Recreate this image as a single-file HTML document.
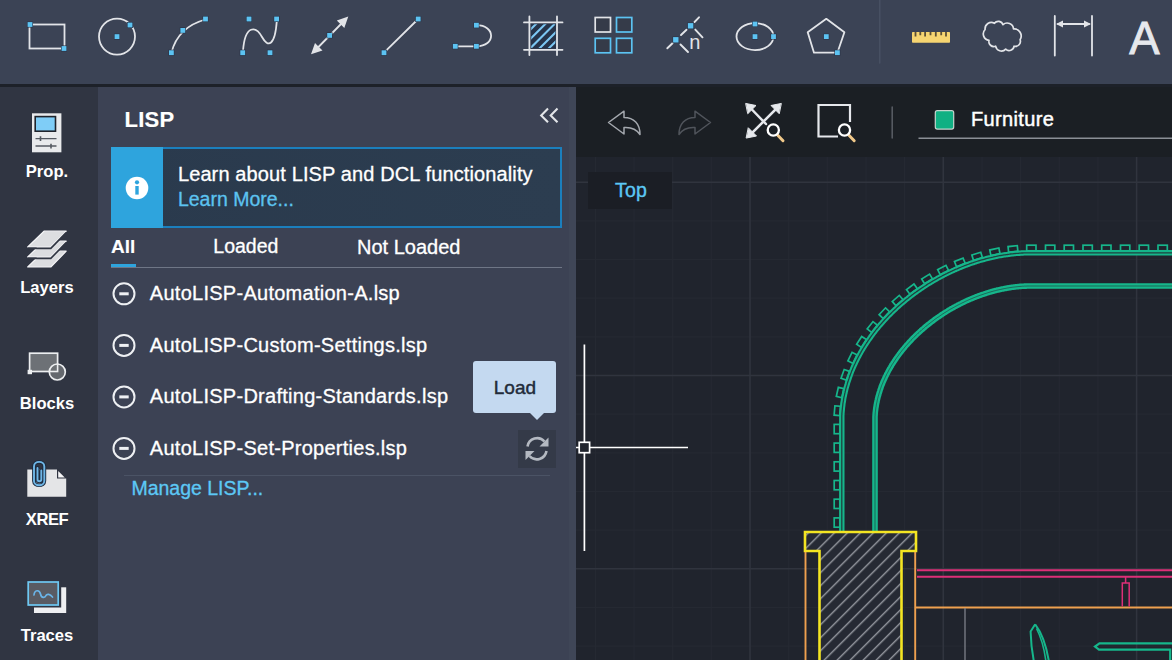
<!DOCTYPE html>
<html lang="en"><head><meta charset="utf-8"><title>AutoCAD Web - LISP</title>
<style>
html,body{margin:0;padding:0}
body{width:1172px;height:660px;overflow:hidden;position:relative;background:#20242d;font-family:"Liberation Sans",sans-serif;}
.t{position:absolute;line-height:1;white-space:nowrap;}
#topbar{position:absolute;left:0;top:0;width:1172px;height:84px;background:#3b4355;}
#topline{position:absolute;left:0;top:84px;width:1172px;height:3px;background:#1d2129;}
#side{position:absolute;left:0;top:87px;width:98px;height:573px;background:#303542;}
#panel{position:absolute;left:98px;top:87px;width:478px;height:573px;background:#3c4254;}
#pedge{position:absolute;left:569px;top:87px;width:7px;height:573px;background:#3f4657;}
#cbar{position:absolute;left:576px;top:87px;width:596px;height:70.5px;background:#1b1f24;}
#canvas{position:absolute;left:576px;top:157px;width:596px;height:503px;background:#20242d;overflow:hidden;}
#info{position:absolute;left:111px;top:147px;width:451px;height:81px;box-sizing:border-box;border:2px solid #1b7fbd;background:linear-gradient(90deg,#2a3a4d,#2c3d50);}
#infoL{position:absolute;left:111px;top:147px;width:52px;height:81px;background:#2ea4dd;}
#tabline{position:absolute;left:111px;top:266.5px;width:451px;height:1.2px;background:#6f7686;}
#tabact{position:absolute;left:111px;top:263.6px;width:25px;height:3.8px;background:#2ea4dd;}
#div2{position:absolute;left:124px;top:474.5px;width:426px;height:1.5px;background:#4b5365;}
#tip{position:absolute;left:473px;top:361px;width:83px;height:52px;background:#c4d9f0;border-radius:3px;}
#tiparrow{position:absolute;left:529px;top:412px;width:0;height:0;border-left:8px solid transparent;border-right:8px solid transparent;border-top:8px solid #c4d9f0;}
#rbtn{position:absolute;left:518px;top:430px;width:38px;height:38px;background:#343a48;}
#topbox{position:absolute;left:588px;top:172px;width:84px;height:37px;background:#1b1e25;}
svg{position:absolute;left:0;top:0;overflow:visible}
</style></head><body>
<div id="topbar"></div><div id="topline"></div><div id="side"></div><div id="panel"></div><div id="pedge"></div><div id="cbar"></div><div id="canvas"><svg width="596" height="503" viewBox="576 157 596 503"><path d="M595.4 157V660M634.0 157V660M672.7 157V660M711.3 157V660M788.7 157V660M827.3 157V660M866.0 157V660M904.6 157V660M982.0 157V660M1020.6 157V660M1059.3 157V660M1097.9 157V660M576 220.9H1172M576 259.5H1172M576 298.2H1172M576 336.8H1172M576 414.2H1172M576 452.8H1172M576 491.5H1172M576 530.1H1172M576 607.5H1172M576 646.1H1172" stroke="#252932" stroke-width="1.2" fill="none"/><path d="M750.0 157V660M943.3 157V660M1136.6 157V660M576 182.2H1172M576 375.5H1172M576 568.8H1172" stroke="#30343e" stroke-width="1.6" fill="none"/><path d="M841.8 533V415.7L841.8 415.7L841.9 414.6L841.9 413.5L842.0 412.4L842.1 411.3L842.2 410.2L842.3 409.1L842.4 408.0L842.5 406.9L842.7 405.8L842.8 404.7L842.9 403.6L843.1 402.5L843.3 401.4L843.5 400.3L843.6 399.2L843.8 398.1L844.0 397.0L844.3 395.9L844.5 394.8L844.7 393.8L845.0 392.7L845.2 391.6L845.5 390.5L845.7 389.5L846.0 388.4L846.3 387.3L846.6 386.3L846.9 385.2L847.2 384.2L847.5 383.1L847.8 382.0L848.2 381.0L848.5 379.9L848.9 378.9L849.2 377.9L849.6 376.8L850.0 375.8L850.3 374.7L850.7 373.7L851.1 372.7L851.5 371.6L851.9 370.6L852.4 369.6L852.8 368.6L853.2 367.5L853.7 366.5L854.1 365.5L854.6 364.5L855.1 363.5L855.5 362.5L856.0 361.5L856.5 360.5L857.0 359.5L857.5 358.5L858.0 357.5L858.5 356.5L859.1 355.5L859.6 354.6L860.1 353.6L860.7 352.6L861.2 351.6L861.8 350.7L862.4 349.7L862.9 348.7L863.5 347.8L864.1 346.8L864.7 345.9L865.3 344.9L865.9 344.0L866.5 343.0L867.2 342.1L867.8 341.2L868.4 340.2L869.1 339.3L869.7 338.4L870.4 337.5L871.0 336.5L871.7 335.6L872.4 334.7L873.0 333.8L873.7 332.9L874.4 332.0L875.1 331.1L875.8 330.2L876.5 329.3L877.2 328.5L878.0 327.6L878.7 326.7L879.4 325.8L880.2 324.9L880.9 324.1L881.7 323.2L882.4 322.4L883.2 321.5L883.9 320.7L884.7 319.8L885.5 319.0L886.3 318.1L887.1 317.3L887.8 316.5L888.6 315.6L889.5 314.8L890.3 314.0L891.1 313.2L891.9 312.4L892.7 311.6L893.5 310.8L894.4 310.0L895.2 309.2L896.1 308.4L896.9 307.6L897.8 306.8L898.6 306.1L899.5 305.3L900.4 304.5L901.2 303.8L902.1 303.0L903.0 302.3L903.9 301.5L904.8 300.8L905.7 300.0L906.5 299.3L907.5 298.6L908.4 297.9L909.3 297.1L910.2 296.4L911.1 295.7L912.0 295.0L913.0 294.3L913.9 293.6L914.8 292.9L915.8 292.3L916.7 291.6L917.7 290.9L918.6 290.2L919.6 289.6L920.5 288.9L921.5 288.3L922.4 287.6L923.4 287.0L924.4 286.3L925.4 285.7L926.3 285.1L927.3 284.4L928.3 283.8L929.3 283.2L930.3 282.6L931.3 282.0L932.3 281.4L933.3 280.8L934.3 280.2L935.3 279.6L936.3 279.1L937.3 278.5L938.3 277.9L939.4 277.4L940.4 276.8L941.4 276.3L942.4 275.7L943.5 275.2L944.5 274.7L945.5 274.1L946.6 273.6L947.6 273.1L948.6 272.6L949.7 272.1L950.7 271.6L951.8 271.1L952.8 270.6L953.9 270.2L954.9 269.7L956.0 269.2L957.1 268.8L958.1 268.3L959.2 267.8L960.3 267.4L961.3 267.0L962.4 266.5L963.5 266.1L964.5 265.7L965.6 265.3L966.7 264.9L967.8 264.5L968.9 264.1L969.9 263.7L971.0 263.3L972.1 262.9L973.2 262.6L974.3 262.2L975.4 261.9L976.5 261.5L977.5 261.2L978.6 260.8L979.7 260.5L980.8 260.2L981.9 259.9L983.0 259.6L984.1 259.3L985.2 259.0L986.3 258.7L987.4 258.4L988.5 258.1L989.6 257.8L990.7 257.6L991.8 257.3L992.9 257.1L994.0 256.8L995.1 256.6L996.2 256.4L997.3 256.1L998.5 255.9L999.6 255.7L1000.7 255.5L1001.8 255.3L1002.9 255.1L1004.0 254.9L1005.1 254.8L1006.2 254.6L1007.3 254.5L1008.4 254.3L1009.5 254.2L1010.6 254.0L1011.7 253.9L1012.8 253.8L1014.0 253.6L1015.1 253.5L1016.2 253.4L1017.3 253.3L1018.4 253.3L1019.5 253.2L1020.6 253.1L1021.7 253.0L1022.8 253.0L1023.9 252.9L1025.0 252.9L1026.1 252.9L1027.2 252.8L1028.3 252.8L1029.4 252.8L1030.5 252.8H1180" stroke="#16b68b" stroke-width="5.4" fill="none" stroke-linejoin="round"/><path d="M841.8 533V415.7L841.8 415.7L841.9 414.6L841.9 413.5L842.0 412.4L842.1 411.3L842.2 410.2L842.3 409.1L842.4 408.0L842.5 406.9L842.7 405.8L842.8 404.7L842.9 403.6L843.1 402.5L843.3 401.4L843.5 400.3L843.6 399.2L843.8 398.1L844.0 397.0L844.3 395.9L844.5 394.8L844.7 393.8L845.0 392.7L845.2 391.6L845.5 390.5L845.7 389.5L846.0 388.4L846.3 387.3L846.6 386.3L846.9 385.2L847.2 384.2L847.5 383.1L847.8 382.0L848.2 381.0L848.5 379.9L848.9 378.9L849.2 377.9L849.6 376.8L850.0 375.8L850.3 374.7L850.7 373.7L851.1 372.7L851.5 371.6L851.9 370.6L852.4 369.6L852.8 368.6L853.2 367.5L853.7 366.5L854.1 365.5L854.6 364.5L855.1 363.5L855.5 362.5L856.0 361.5L856.5 360.5L857.0 359.5L857.5 358.5L858.0 357.5L858.5 356.5L859.1 355.5L859.6 354.6L860.1 353.6L860.7 352.6L861.2 351.6L861.8 350.7L862.4 349.7L862.9 348.7L863.5 347.8L864.1 346.8L864.7 345.9L865.3 344.9L865.9 344.0L866.5 343.0L867.2 342.1L867.8 341.2L868.4 340.2L869.1 339.3L869.7 338.4L870.4 337.5L871.0 336.5L871.7 335.6L872.4 334.7L873.0 333.8L873.7 332.9L874.4 332.0L875.1 331.1L875.8 330.2L876.5 329.3L877.2 328.5L878.0 327.6L878.7 326.7L879.4 325.8L880.2 324.9L880.9 324.1L881.7 323.2L882.4 322.4L883.2 321.5L883.9 320.7L884.7 319.8L885.5 319.0L886.3 318.1L887.1 317.3L887.8 316.5L888.6 315.6L889.5 314.8L890.3 314.0L891.1 313.2L891.9 312.4L892.7 311.6L893.5 310.8L894.4 310.0L895.2 309.2L896.1 308.4L896.9 307.6L897.8 306.8L898.6 306.1L899.5 305.3L900.4 304.5L901.2 303.8L902.1 303.0L903.0 302.3L903.9 301.5L904.8 300.8L905.7 300.0L906.5 299.3L907.5 298.6L908.4 297.9L909.3 297.1L910.2 296.4L911.1 295.7L912.0 295.0L913.0 294.3L913.9 293.6L914.8 292.9L915.8 292.3L916.7 291.6L917.7 290.9L918.6 290.2L919.6 289.6L920.5 288.9L921.5 288.3L922.4 287.6L923.4 287.0L924.4 286.3L925.4 285.7L926.3 285.1L927.3 284.4L928.3 283.8L929.3 283.2L930.3 282.6L931.3 282.0L932.3 281.4L933.3 280.8L934.3 280.2L935.3 279.6L936.3 279.1L937.3 278.5L938.3 277.9L939.4 277.4L940.4 276.8L941.4 276.3L942.4 275.7L943.5 275.2L944.5 274.7L945.5 274.1L946.6 273.6L947.6 273.1L948.6 272.6L949.7 272.1L950.7 271.6L951.8 271.1L952.8 270.6L953.9 270.2L954.9 269.7L956.0 269.2L957.1 268.8L958.1 268.3L959.2 267.8L960.3 267.4L961.3 267.0L962.4 266.5L963.5 266.1L964.5 265.7L965.6 265.3L966.7 264.9L967.8 264.5L968.9 264.1L969.9 263.7L971.0 263.3L972.1 262.9L973.2 262.6L974.3 262.2L975.4 261.9L976.5 261.5L977.5 261.2L978.6 260.8L979.7 260.5L980.8 260.2L981.9 259.9L983.0 259.6L984.1 259.3L985.2 259.0L986.3 258.7L987.4 258.4L988.5 258.1L989.6 257.8L990.7 257.6L991.8 257.3L992.9 257.1L994.0 256.8L995.1 256.6L996.2 256.4L997.3 256.1L998.5 255.9L999.6 255.7L1000.7 255.5L1001.8 255.3L1002.9 255.1L1004.0 254.9L1005.1 254.8L1006.2 254.6L1007.3 254.5L1008.4 254.3L1009.5 254.2L1010.6 254.0L1011.7 253.9L1012.8 253.8L1014.0 253.6L1015.1 253.5L1016.2 253.4L1017.3 253.3L1018.4 253.3L1019.5 253.2L1020.6 253.1L1021.7 253.0L1022.8 253.0L1023.9 252.9L1025.0 252.9L1026.1 252.9L1027.2 252.8L1028.3 252.8L1029.4 252.8L1030.5 252.8H1180" stroke="#20242d" stroke-opacity="0.8" stroke-width="1.3" fill="none" stroke-linejoin="round"/><path d="M875.0 533V417.3L875.0 417.3L875.0 416.5L875.1 415.6L875.1 414.8L875.2 414.0L875.2 413.1L875.3 412.3L875.4 411.5L875.5 410.7L875.6 409.9L875.7 409.0L875.8 408.2L875.9 407.4L876.1 406.6L876.2 405.8L876.3 404.9L876.5 404.1L876.6 403.3L876.8 402.5L877.0 401.7L877.1 400.9L877.3 400.1L877.5 399.2L877.7 398.4L877.9 397.6L878.1 396.8L878.3 396.0L878.6 395.2L878.8 394.4L879.0 393.6L879.3 392.8L879.5 392.0L879.8 391.2L880.0 390.3L880.3 389.5L880.6 388.7L880.9 387.9L881.1 387.1L881.4 386.3L881.7 385.5L882.0 384.7L882.4 383.9L882.7 383.1L883.0 382.3L883.3 381.5L883.7 380.8L884.0 380.0L884.4 379.2L884.8 378.4L885.1 377.6L885.5 376.8L885.9 376.0L886.3 375.2L886.6 374.4L887.0 373.7L887.5 372.9L887.9 372.1L888.3 371.3L888.7 370.5L889.1 369.7L889.6 369.0L890.0 368.2L890.5 367.4L890.9 366.7L891.4 365.9L891.8 365.1L892.3 364.3L892.8 363.6L893.3 362.8L893.8 362.1L894.3 361.3L894.8 360.5L895.3 359.8L895.8 359.0L896.3 358.3L896.8 357.5L897.4 356.8L897.9 356.0L898.5 355.3L899.0 354.5L899.6 353.8L900.1 353.1L900.7 352.3L901.3 351.6L901.8 350.9L902.4 350.1L903.0 349.4L903.6 348.7L904.2 348.0L904.8 347.2L905.4 346.5L906.0 345.8L906.6 345.1L907.3 344.4L907.9 343.7L908.5 343.0L909.2 342.3L909.8 341.6L910.5 340.9L911.1 340.2L911.8 339.5L912.4 338.8L913.1 338.1L913.8 337.4L914.5 336.8L915.2 336.1L915.8 335.4L916.5 334.7L917.2 334.1L917.9 333.4L918.6 332.8L919.4 332.1L920.1 331.4L920.8 330.8L921.5 330.1L922.2 329.5L923.0 328.9L923.7 328.2L924.5 327.6L925.2 327.0L925.9 326.3L926.7 325.7L927.5 325.1L928.2 324.5L929.0 323.9L929.8 323.3L930.5 322.7L931.3 322.1L932.1 321.5L932.9 320.9L933.7 320.3L934.4 319.7L935.2 319.1L936.0 318.6L936.8 318.0L937.6 317.4L938.5 316.9L939.3 316.3L940.1 315.8L940.9 315.2L941.7 314.7L942.5 314.1L943.4 313.6L944.2 313.0L945.0 312.5L945.9 312.0L946.7 311.5L947.5 311.0L948.4 310.4L949.2 309.9L950.1 309.4L950.9 308.9L951.8 308.5L952.6 308.0L953.5 307.5L954.4 307.0L955.2 306.5L956.1 306.1L957.0 305.6L957.8 305.1L958.7 304.7L959.6 304.2L960.5 303.8L961.3 303.4L962.2 302.9L963.1 302.5L964.0 302.1L964.9 301.6L965.7 301.2L966.6 300.8L967.5 300.4L968.4 300.0L969.3 299.6L970.2 299.2L971.1 298.9L972.0 298.5L972.9 298.1L973.8 297.7L974.7 297.4L975.6 297.0L976.5 296.7L977.4 296.3L978.3 296.0L979.2 295.6L980.1 295.3L981.0 295.0L981.9 294.7L982.8 294.4L983.8 294.1L984.7 293.7L985.6 293.5L986.5 293.2L987.4 292.9L988.3 292.6L989.2 292.3L990.1 292.1L991.0 291.8L992.0 291.5L992.9 291.3L993.8 291.0L994.7 290.8L995.6 290.6L996.5 290.3L997.4 290.1L998.3 289.9L999.2 289.7L1000.2 289.5L1001.1 289.3L1002.0 289.1L1002.9 288.9L1003.8 288.7L1004.7 288.5L1005.6 288.4L1006.5 288.2L1007.4 288.0L1008.3 287.9L1009.2 287.7L1010.1 287.6L1011.0 287.5L1011.9 287.3L1012.8 287.2L1013.7 287.1L1014.6 287.0L1015.5 286.9L1016.4 286.8L1017.3 286.7L1018.2 286.6L1019.1 286.5L1020.0 286.4L1020.9 286.4L1021.7 286.3L1022.6 286.2L1023.5 286.2L1024.4 286.1L1025.3 286.1L1026.1 286.1L1027.0 286.0L1027.9 286.0L1028.8 286.0L1029.6 286.0L1030.5 286.0H1180" stroke="#16b68b" stroke-width="5.6" fill="none" stroke-linejoin="round"/><path d="M875.0 533V417.3L875.0 417.3L875.0 416.5L875.1 415.6L875.1 414.8L875.2 414.0L875.2 413.1L875.3 412.3L875.4 411.5L875.5 410.7L875.6 409.9L875.7 409.0L875.8 408.2L875.9 407.4L876.1 406.6L876.2 405.8L876.3 404.9L876.5 404.1L876.6 403.3L876.8 402.5L877.0 401.7L877.1 400.9L877.3 400.1L877.5 399.2L877.7 398.4L877.9 397.6L878.1 396.8L878.3 396.0L878.6 395.2L878.8 394.4L879.0 393.6L879.3 392.8L879.5 392.0L879.8 391.2L880.0 390.3L880.3 389.5L880.6 388.7L880.9 387.9L881.1 387.1L881.4 386.3L881.7 385.5L882.0 384.7L882.4 383.9L882.7 383.1L883.0 382.3L883.3 381.5L883.7 380.8L884.0 380.0L884.4 379.2L884.8 378.4L885.1 377.6L885.5 376.8L885.9 376.0L886.3 375.2L886.6 374.4L887.0 373.7L887.5 372.9L887.9 372.1L888.3 371.3L888.7 370.5L889.1 369.7L889.6 369.0L890.0 368.2L890.5 367.4L890.9 366.7L891.4 365.9L891.8 365.1L892.3 364.3L892.8 363.6L893.3 362.8L893.8 362.1L894.3 361.3L894.8 360.5L895.3 359.8L895.8 359.0L896.3 358.3L896.8 357.5L897.4 356.8L897.9 356.0L898.5 355.3L899.0 354.5L899.6 353.8L900.1 353.1L900.7 352.3L901.3 351.6L901.8 350.9L902.4 350.1L903.0 349.4L903.6 348.7L904.2 348.0L904.8 347.2L905.4 346.5L906.0 345.8L906.6 345.1L907.3 344.4L907.9 343.7L908.5 343.0L909.2 342.3L909.8 341.6L910.5 340.9L911.1 340.2L911.8 339.5L912.4 338.8L913.1 338.1L913.8 337.4L914.5 336.8L915.2 336.1L915.8 335.4L916.5 334.7L917.2 334.1L917.9 333.4L918.6 332.8L919.4 332.1L920.1 331.4L920.8 330.8L921.5 330.1L922.2 329.5L923.0 328.9L923.7 328.2L924.5 327.6L925.2 327.0L925.9 326.3L926.7 325.7L927.5 325.1L928.2 324.5L929.0 323.9L929.8 323.3L930.5 322.7L931.3 322.1L932.1 321.5L932.9 320.9L933.7 320.3L934.4 319.7L935.2 319.1L936.0 318.6L936.8 318.0L937.6 317.4L938.5 316.9L939.3 316.3L940.1 315.8L940.9 315.2L941.7 314.7L942.5 314.1L943.4 313.6L944.2 313.0L945.0 312.5L945.9 312.0L946.7 311.5L947.5 311.0L948.4 310.4L949.2 309.9L950.1 309.4L950.9 308.9L951.8 308.5L952.6 308.0L953.5 307.5L954.4 307.0L955.2 306.5L956.1 306.1L957.0 305.6L957.8 305.1L958.7 304.7L959.6 304.2L960.5 303.8L961.3 303.4L962.2 302.9L963.1 302.5L964.0 302.1L964.9 301.6L965.7 301.2L966.6 300.8L967.5 300.4L968.4 300.0L969.3 299.6L970.2 299.2L971.1 298.9L972.0 298.5L972.9 298.1L973.8 297.7L974.7 297.4L975.6 297.0L976.5 296.7L977.4 296.3L978.3 296.0L979.2 295.6L980.1 295.3L981.0 295.0L981.9 294.7L982.8 294.4L983.8 294.1L984.7 293.7L985.6 293.5L986.5 293.2L987.4 292.9L988.3 292.6L989.2 292.3L990.1 292.1L991.0 291.8L992.0 291.5L992.9 291.3L993.8 291.0L994.7 290.8L995.6 290.6L996.5 290.3L997.4 290.1L998.3 289.9L999.2 289.7L1000.2 289.5L1001.1 289.3L1002.0 289.1L1002.9 288.9L1003.8 288.7L1004.7 288.5L1005.6 288.4L1006.5 288.2L1007.4 288.0L1008.3 287.9L1009.2 287.7L1010.1 287.6L1011.0 287.5L1011.9 287.3L1012.8 287.2L1013.7 287.1L1014.6 287.0L1015.5 286.9L1016.4 286.8L1017.3 286.7L1018.2 286.6L1019.1 286.5L1020.0 286.4L1020.9 286.4L1021.7 286.3L1022.6 286.2L1023.5 286.2L1024.4 286.1L1025.3 286.1L1026.1 286.1L1027.0 286.0L1027.9 286.0L1028.8 286.0L1029.6 286.0L1030.5 286.0H1180" stroke="#20242d" stroke-opacity="0.55" stroke-width="1.0" fill="none" stroke-linejoin="round"/><g fill="none" stroke="#16b68b" stroke-width="1.7"><rect x="-4.7" y="-5.6" width="9.3" height="5.6" transform="translate(839.8 522.5) rotate(-90.0)"/><rect x="-4.7" y="-5.6" width="9.3" height="5.6" transform="translate(839.8 503.8) rotate(-90.0)"/><rect x="-4.7" y="-5.6" width="9.3" height="5.6" transform="translate(839.8 485.1) rotate(-90.0)"/><rect x="-4.7" y="-5.6" width="9.3" height="5.6" transform="translate(839.8 466.4) rotate(-90.0)"/><rect x="-4.7" y="-5.6" width="9.3" height="5.6" transform="translate(839.8 447.7) rotate(-90.0)"/><rect x="-4.7" y="-5.6" width="9.3" height="5.6" transform="translate(839.8 429.0) rotate(-90.0)"/><rect x="-4.7" y="-5.6" width="9.3" height="5.6" transform="translate(1031.4 250.8) rotate(0.0)"/><rect x="-4.7" y="-5.6" width="9.3" height="5.6" transform="translate(1050.2 250.8) rotate(0.0)"/><rect x="-4.7" y="-5.6" width="9.3" height="5.6" transform="translate(1068.9 250.8) rotate(0.0)"/><rect x="-4.7" y="-5.6" width="9.3" height="5.6" transform="translate(1087.7 250.8) rotate(0.0)"/><rect x="-4.7" y="-5.6" width="9.3" height="5.6" transform="translate(1106.4 250.8) rotate(0.0)"/><rect x="-4.7" y="-5.6" width="9.3" height="5.6" transform="translate(1125.2 250.8) rotate(0.0)"/><rect x="-4.7" y="-5.6" width="9.3" height="5.6" transform="translate(1143.9 250.8) rotate(0.0)"/><rect x="-4.7" y="-5.6" width="9.3" height="5.6" transform="translate(1162.7 250.8) rotate(0.0)"/><rect x="-4.7" y="-5.6" width="9.3" height="5.6" transform="translate(1181.4 250.8) rotate(0.0)"/><rect x="-4.7" y="-5.6" width="9.3" height="5.6" transform="translate(840.1 410.9) rotate(-85.1)"/><rect x="-4.7" y="-5.6" width="9.3" height="5.6" transform="translate(842.8 393.1) rotate(-77.4)"/><rect x="-4.7" y="-5.6" width="9.3" height="5.6" transform="translate(847.9 375.7) rotate(-70.2)"/><rect x="-4.7" y="-5.6" width="9.3" height="5.6" transform="translate(855.0 359.1) rotate(-63.5)"/><rect x="-4.7" y="-5.6" width="9.3" height="5.6" transform="translate(863.9 343.4) rotate(-57.2)"/><rect x="-4.7" y="-5.6" width="9.3" height="5.6" transform="translate(874.5 328.7) rotate(-51.4)"/><rect x="-4.7" y="-5.6" width="9.3" height="5.6" transform="translate(886.4 315.1) rotate(-46.3)"/><rect x="-4.7" y="-5.6" width="9.3" height="5.6" transform="translate(899.5 302.6) rotate(-41.1)"/><rect x="-4.7" y="-5.6" width="9.3" height="5.6" transform="translate(913.6 291.3) rotate(-36.4)"/><rect x="-4.7" y="-5.6" width="9.3" height="5.6" transform="translate(928.6 281.3) rotate(-31.5)"/><rect x="-4.7" y="-5.6" width="9.3" height="5.6" transform="translate(944.4 272.4) rotate(-26.9)"/><rect x="-4.7" y="-5.6" width="9.3" height="5.6" transform="translate(960.9 265.0) rotate(-21.9)"/><rect x="-4.7" y="-5.6" width="9.3" height="5.6" transform="translate(978.0 259.0) rotate(-17.1)"/><rect x="-4.7" y="-5.6" width="9.3" height="5.6" transform="translate(995.5 254.5) rotate(-11.7)"/><rect x="-4.7" y="-5.6" width="9.3" height="5.6" transform="translate(1013.3 251.7) rotate(-6.0)"/></g><defs><pattern id="hat" width="9.2" height="9.2" patternUnits="userSpaceOnUse" patternTransform="rotate(-45)"><rect width="9.2" height="9.2" fill="#262a34"/><line x1="0" y1="0" x2="9.2" y2="0" stroke="#8d9098" stroke-width="2.9"/></pattern></defs><path d="M805 532H916V551H901.5V670H819.5V551H805Z" fill="url(#hat)" stroke="#f4e522" stroke-width="2.6" stroke-linejoin="miter"/><path d="M805.5 552V660M915.2 552V660M915 607.5H1172" stroke="#eea04f" stroke-width="1.9" fill="none"/><path d="M917 570.2H1172M917 576.8H1172" stroke="#de2f78" stroke-width="2" fill="none"/><path d="M1125.6 577V583M1122.3 606.5V583H1129.2V606.5" stroke="#de2f78" stroke-width="1.5" fill="none"/><path d="M965 608V660" stroke="#858991" stroke-width="1.2" fill="none"/><path d="M1035.2 624.3L1030.6 631.5Q1031 647 1034 662M1035.2 624.3Q1045 637 1049 662" stroke="#16b68b" stroke-width="2" fill="none" stroke-linejoin="round"/><path d="M1036.500 628.500Q1043.500 642 1046 662" stroke="#16b68b" stroke-width="1.600" fill="none"/><path d="M1172 643.4H1099.5L1095 646.600L1099 649.700H1170.200V662" stroke="#16b68b" stroke-width="2.200" fill="none" stroke-linejoin="miter"/><path d="M584.4 344.5V551M576 447.5H688" stroke="#fff" stroke-width="1.7" fill="none"/><rect x="579.2" y="442.3" width="10.4" height="10.4" fill="#20242d" stroke="#fff" stroke-width="1.7"/></svg></div><div id="topbox"></div><svg width="1172" height="84" viewBox="0 0 1172 84" fill="none" stroke-linecap="round"><rect x="29.5" y="24.5" width="35" height="24" stroke="#e2e4e8" stroke-width="1.8"/><rect x="27.6" y="22.1" width="4.8" height="4.8" fill="#5cc3f2" stroke="#2a3448" stroke-width="1.2" paint-order="stroke"/><rect x="61.6" y="46.1" width="4.8" height="4.8" fill="#5cc3f2" stroke="#2a3448" stroke-width="1.2" paint-order="stroke"/><circle cx="117" cy="36.6" r="18" stroke="#e2e4e8" stroke-width="1.8"/><rect x="114.6" y="34.2" width="4.8" height="4.8" fill="#5cc3f2" stroke="#2a3448" stroke-width="1.2" paint-order="stroke"/><rect x="127.6" y="22.6" width="4.8" height="4.8" fill="#5cc3f2" stroke="#2a3448" stroke-width="1.2" paint-order="stroke"/><path d="M171.5 52.5Q178 27 205.5 19.5" stroke="#e2e4e8" stroke-width="1.8"/><rect x="169.0" y="50.3" width="4.8" height="4.8" fill="#5cc3f2" stroke="#2a3448" stroke-width="1.2" paint-order="stroke"/><rect x="180.4" y="28.0" width="4.8" height="4.8" fill="#5cc3f2" stroke="#2a3448" stroke-width="1.2" paint-order="stroke"/><rect x="203.1" y="16.6" width="4.8" height="4.8" fill="#5cc3f2" stroke="#2a3448" stroke-width="1.2" paint-order="stroke"/><path d="M243 51C245 24 256 26 262 37C268 48 275 46 276.8 21" stroke="#e2e4e8" stroke-width="1.8"/><rect x="246.6" y="16.6" width="4.8" height="4.8" fill="#5cc3f2" stroke="#2a3448" stroke-width="1.2" paint-order="stroke"/><rect x="274.2" y="16.6" width="4.8" height="4.8" fill="#5cc3f2" stroke="#2a3448" stroke-width="1.2" paint-order="stroke"/><rect x="240.3" y="50.3" width="4.8" height="4.8" fill="#5cc3f2" stroke="#2a3448" stroke-width="1.2" paint-order="stroke"/><rect x="267.6" y="50.3" width="4.8" height="4.8" fill="#5cc3f2" stroke="#2a3448" stroke-width="1.2" paint-order="stroke"/><path d="M316 49.5L343.5 21.5" stroke="#e2e4e8" stroke-width="1.8"/><path d="M311 54.3L315 43L322.5 50.5ZM348.3 16.6L344.3 28L336.8 20.5Z" fill="#e2e4e8" stroke="none"/><rect x="327.2" y="33.0" width="4.8" height="4.8" fill="#5cc3f2" stroke="#2a3448" stroke-width="1.2" paint-order="stroke"/><path d="M384 52.7L418.2 19" stroke="#e2e4e8" stroke-width="1.8"/><rect x="381.6" y="50.3" width="4.8" height="4.8" fill="#5cc3f2" stroke="#2a3448" stroke-width="1.2" paint-order="stroke"/><rect x="415.8" y="16.6" width="4.8" height="4.8" fill="#5cc3f2" stroke="#2a3448" stroke-width="1.2" paint-order="stroke"/><path d="M455.3 46.3H476.4M476.4 25.2C496 25.2 496 46.3 476.4 46.3" stroke="#e2e4e8" stroke-width="1.8"/><rect x="452.9" y="43.9" width="4.8" height="4.8" fill="#5cc3f2" stroke="#2a3448" stroke-width="1.2" paint-order="stroke"/><rect x="474.0" y="43.9" width="4.8" height="4.8" fill="#5cc3f2" stroke="#2a3448" stroke-width="1.2" paint-order="stroke"/><rect x="474.0" y="22.8" width="4.8" height="4.8" fill="#5cc3f2" stroke="#2a3448" stroke-width="1.2" paint-order="stroke"/><rect x="530.6" y="23.6" width="25.4" height="25" fill="#263349" stroke="none"/><clipPath id="hc"><rect x="531.2" y="24.2" width="24.2" height="23.8"/></clipPath><g clip-path="url(#hc)"><path d="M526 34L541 19M526 43.300L550.300 19M528 50.600L559.600 19M537.300 50.600L562 25.900M546.600 50.600L562 35.200" stroke="#7cc6f2" stroke-width="2.100" stroke-linecap="butt"/></g><path d="M529.4 16.5V55M557 16.5V55M524 22.4H562.500M524 49.800H562.500" stroke="#e2e4e8" stroke-width="1.8"/><rect x="595.2" y="17.5" width="15.3" height="14.5" fill="#353b49" stroke="#e2e4e8" stroke-width="1.7"/><rect x="616.5" y="17.5" width="15.3" height="14.5" fill="#353b49" stroke="#5cc3f2" stroke-width="1.7"/><rect x="595.2" y="38.3" width="15.3" height="14.5" fill="#353b49" stroke="#5cc3f2" stroke-width="1.7"/><rect x="616.5" y="38.3" width="15.3" height="14.5" fill="#353b49" stroke="#5cc3f2" stroke-width="1.7"/><path d="M667.3 48.3L672.5 43.2M681 35L686.5 29.700M694.500 22L699 17.300" stroke="#e2e4e8" stroke-width="1.9"/><path d="M695.3 29.600L702.500 37.300M680.500 44.500L688 52" stroke="#e2e4e8" stroke-width="1.9"/><rect x="687.9" y="23.1" width="5.4" height="5.4" fill="#5cc3f2" stroke="#2a3448" stroke-width="1.2" paint-order="stroke"/><rect x="673.1" y="37.1" width="5.4" height="5.4" fill="#5cc3f2" stroke="#2a3448" stroke-width="1.2" paint-order="stroke"/><text x="689.3" y="48.700" font-family="Liberation Sans, sans-serif" font-size="20" fill="#e2e4e8" stroke="none">n</text><ellipse cx="755" cy="36.6" rx="18.5" ry="13.5" stroke="#e2e4e8" stroke-width="1.8"/><rect x="752.6" y="34.2" width="4.8" height="4.8" fill="#5cc3f2" stroke="#2a3448" stroke-width="1.2" paint-order="stroke"/><rect x="752.6" y="21.6" width="4.8" height="4.8" fill="#5cc3f2" stroke="#2a3448" stroke-width="1.2" paint-order="stroke"/><rect x="771.1" y="34.2" width="4.8" height="4.8" fill="#5cc3f2" stroke="#2a3448" stroke-width="1.2" paint-order="stroke"/><path d="M826.3 18.8L844.4 32.2L837.4 52.7H814L807.7 32.2Z" stroke="#e2e4e8" stroke-width="1.8" stroke-linejoin="round"/><rect x="823.9" y="34.2" width="4.8" height="4.8" fill="#5cc3f2" stroke="#2a3448" stroke-width="1.2" paint-order="stroke"/><rect x="835.0" y="50.3" width="4.8" height="4.8" fill="#5cc3f2" stroke="#2a3448" stroke-width="1.2" paint-order="stroke"/><path d="M879.8 0V63" stroke="#4b5366" stroke-width="1.3"/><rect x="912" y="32" width="38" height="10.800" rx="0.8" fill="#f6d571"/><path d="M915.500 32V36.500M920.300 32V35.300M925.100 32V36.500M930.500 32V35.300M935.800 32V36.500M941.200 32V35.300M946 32V36.500" stroke="#5e5236" stroke-width="1.800" stroke-linecap="butt"/><path d="M985.1 29.5A6.3 6.3 0 0 1 994.4 23.3A4.9 4.9 0 0 1 1003.0 24.7A6.3 6.3 0 0 1 1013.5 28.9A7.1 7.1 0 0 1 1020.1 39.7A5.0 5.0 0 0 1 1014.1 46.2A5.0 5.0 0 0 1 1005.7 49.2A5.9 5.9 0 0 1 995.6 46.2A5.0 5.0 0 0 1 989.0 40.3A6.4 6.4 0 0 1 985.1 29.5Z" stroke="#e2e4e8" stroke-width="1.700" stroke-linejoin="round"/><path d="M1054.8 16V55.5M1092 16V55.5M1058 24H1089" stroke="#e2e4e8" stroke-width="1.8"/><path d="M1056 24L1063 20.5V27.5ZM1091 24L1084 20.5V27.5Z" fill="#e2e4e8" stroke="none"/></svg><div class="t" style="left:1129.3px;top:15.68px;font-size:45.5px;color:#e6e8ec;font-weight:normal;letter-spacing:0px;-webkit-text-stroke:0.9px #e6e8ec;">A</div><svg width="1172" height="660" viewBox="0 0 1172 660" fill="none" stroke-linecap="round" stroke-linejoin="round"><path d="M608.5 122.5L624 111.200V117.500C634 117.500 640 124 640 134.500C636 128.500 631 127 624 127.500V134Z" stroke="#a4a8ae" stroke-width="1.5"/><path d="M710.500 122.500L695 111.200V117.500C685 117.500 679 124 679 134.500C683 128.500 688 127 695 127.500V134Z" stroke="#50545b" stroke-width="1.5"/><path d="M749.5 107L766 124M778 107L750 135" stroke="#e6e8ec" stroke-width="2.5"/><path d="M746 103.500L756 105.500L748 113.500ZM781 103.500L771 105.500L779 113.500ZM746.500 138L756.500 136L748.500 128Z" fill="#e6e8ec" stroke="#e6e8ec" stroke-width="1"/><path d="M777.500 135L783 140.700" stroke="#f0c88a" stroke-width="3"/><circle cx="773.3" cy="130" r="5.6" fill="#1b1f24" stroke="#fff" stroke-width="2.3"/><path d="M838 136.500H818.500V105H850V122" stroke="#e6e8ec" stroke-width="2.2" stroke-linejoin="miter" stroke-linecap="butt"/><path d="M848.700 135L854.200 140.700" stroke="#f0c88a" stroke-width="3"/><circle cx="844.5" cy="130" r="5.6" fill="#1b1f24" stroke="#fff" stroke-width="2.3"/><path d="M892.2 107V138" stroke="#5a5e66" stroke-width="1.5"/><rect x="935.3" y="110.700" width="18.400" height="18.400" rx="2" fill="#10b083" stroke="#c5d6cf" stroke-width="1.2"/><path d="M918.500 138.200H1172" stroke="#8b8f96" stroke-width="1.5" stroke-linecap="butt"/></svg><div class="t" style="left:971px;top:109.47px;font-size:20px;color:#fff;font-weight:normal;letter-spacing:0.35px;-webkit-text-stroke:0.45px #fff;">Furniture</div><div class="t" style="left:615px;top:180.79px;font-size:19.5px;color:#5cc8f5;font-weight:normal;letter-spacing:0.2px;-webkit-text-stroke:0.35px #5cc8f5;">Top</div><svg width="97" height="660" viewBox="0 0 97 660" fill="none"><rect x="32" y="113.300" width="29.400" height="39" fill="#e9eaec"/><rect x="35.200" y="116.600" width="20.300" height="14.600" fill="#7fcdf7" stroke="#20242c" stroke-width="1.6"/><path d="M35.500 138.600H56.500M35.500 146H56.500" stroke="#555a62" stroke-width="1.3"/><path d="M40.500 136.300V141M51 143.700V148.400" stroke="#555a62" stroke-width="1.6"/><path d="M44 251.2H66.200L50.800 267H27.700Z" fill="#dcdde0" stroke="#f4f4f6" stroke-width="1.2" stroke-linejoin="round"/><path d="M44 241.2H66.200L50.800 257H27.700Z" fill="#dcdde0" stroke="#f4f4f6" stroke-width="1.2" stroke-linejoin="round"/><path d="M44 231.2H66.200L50.800 247H27.700Z" fill="#dcdde0" stroke="#f4f4f6" stroke-width="1.2" stroke-linejoin="round"/><path d="M27.700 248.400H50.800L66.200 232.600M27.700 258.400H50.800L66.200 242.600" stroke="#303542" stroke-width="1.6" fill="none"/><rect x="29.600" y="353.200" width="28" height="18.300" fill="#6d7176" stroke="#eceef0" stroke-width="1.7"/><circle cx="57.300" cy="372" r="8" fill="#6d7176" fill-opacity="0.85" stroke="#eceef0" stroke-width="1.7"/><path d="M49.300 371.500H57.600V363.700" stroke="#eceef0" stroke-width="1.5" fill="none"/><rect x="27.600" y="369.800" width="4.400" height="4.400" fill="#eceef0"/><path d="M27.300 469.500H57.600L66.200 478V496.800H27.300Z" fill="#e4e5e7"/><path d="M57.600 469.500V478H66.200Z" fill="#f6f6f7" stroke="#303542" stroke-width="1.2"/><path d="M41 470V479.500C41 481 39.600 481 39.600 479.500V467C39.600 464 42.300 464 42.300 467" stroke="none"/><path d="M34 466.500C34 460.300 44.300 460.300 44.300 466.500V481C44.300 486.600 34 486.600 34 481V466.500M41.300 470.500V479.500C41.300 481.800 37.500 481.800 37.500 479.500V468" stroke="#1d2b3f" stroke-width="3.800" stroke-linecap="round" fill="none"/><path d="M34 466.500C34 460.300 44.300 460.300 44.300 466.500V481C44.300 486.600 34 486.600 34 481V466.500M41.300 470.500V479.500C41.300 481.800 37.500 481.800 37.500 479.500V468" stroke="#6fb6e6" stroke-width="1.900" stroke-linecap="round" fill="none"/><rect x="34" y="587.300" width="32.200" height="25.700" fill="#eeeff1"/><rect x="26.400" y="580.200" width="34.800" height="27.300" fill="#303542"/><rect x="28.200" y="582" width="30" height="23" fill="#595b63" stroke="#6ec8f3" stroke-width="1.700"/><path d="M34 595C34.500 589.500 39.500 589.500 40.500 594C41.500 598.500 45 598 46 595.500C47 593.500 50 594 52.500 597" stroke="#6ab4e8" stroke-width="1.700" stroke-linecap="round" fill="none"/></svg><div class="t" style="left:-13px;width:120px;text-align:center;top:163.85px;font-size:16.6px;color:#fff;font-weight:bold;letter-spacing:0px;">Prop.</div><div class="t" style="left:-13px;width:120px;text-align:center;top:279.85px;font-size:16.6px;color:#fff;font-weight:bold;letter-spacing:0px;">Layers</div><div class="t" style="left:-13px;width:120px;text-align:center;top:396.05px;font-size:16.6px;color:#fff;font-weight:bold;letter-spacing:0px;">Blocks</div><div class="t" style="left:-13px;width:120px;text-align:center;top:512.15px;font-size:16.6px;color:#fff;font-weight:bold;letter-spacing:-0.5px;">XREF</div><div class="t" style="left:-13px;width:120px;text-align:center;top:628.35px;font-size:16.6px;color:#fff;font-weight:bold;letter-spacing:0px;">Traces</div><div class="t" style="left:124.6px;top:109.28px;font-size:22px;color:#fff;font-weight:bold;letter-spacing:0.2px;-webkit-text-stroke:0.15px #fff;">LISP</div><svg width="1172" height="660" viewBox="0 0 1172 660" fill="none"><path d="M548 108.600L541.200 115.400L548 122.200M557.500 108.600L550.700 115.400L557.500 122.200" stroke="#e3e5e9" stroke-width="2.100" stroke-linecap="butt" stroke-linejoin="miter"/></svg><div id="info"></div><div id="infoL"></div><svg width="1172" height="660" viewBox="0 0 1172 660"><circle cx="137" cy="188" r="11.300" fill="#fff"/><rect x="135.300" y="186" width="3.400" height="8.600" fill="#2ea4dd"/><circle cx="137" cy="182.300" r="2.100" fill="#2ea4dd"/></svg><div class="t" style="left:177.9px;top:163.57px;font-size:20px;color:#fff;font-weight:normal;letter-spacing:0.12px;-webkit-text-stroke:0.3px #fff;">Learn about LISP and DCL functionality</div><div class="t" style="left:177.9px;top:190.19px;font-size:19.5px;color:#5cc3f0;font-weight:normal;letter-spacing:0px;-webkit-text-stroke:0.3px #5cc3f0;">Learn More...</div><div class="t" style="left:111px;top:237.42px;font-size:19px;color:#fff;font-weight:bold;letter-spacing:0px;-webkit-text-stroke:0.15px #fff;">All</div><div class="t" style="left:213.3px;top:236.99px;font-size:19.5px;color:#fff;font-weight:normal;letter-spacing:0px;-webkit-text-stroke:0.3px #fff;">Loaded</div><div class="t" style="left:357px;top:236.57px;font-size:20px;color:#fff;font-weight:normal;letter-spacing:0px;-webkit-text-stroke:0.3px #fff;">Not Loaded</div><div id="tabline"></div><div id="tabact"></div><svg width="1172" height="660" viewBox="0 0 1172 660" fill="none"><circle cx="124" cy="293.8" r="10.500" stroke="#eef0f3" stroke-width="2"/><rect x="119.300" y="292.3" width="9.400" height="3" fill="#eef0f3"/><circle cx="124" cy="345.4" r="10.500" stroke="#eef0f3" stroke-width="2"/><rect x="119.300" y="343.9" width="9.400" height="3" fill="#eef0f3"/><circle cx="124" cy="396.9" r="10.500" stroke="#eef0f3" stroke-width="2"/><rect x="119.300" y="395.4" width="9.400" height="3" fill="#eef0f3"/><circle cx="124" cy="448.4" r="10.500" stroke="#eef0f3" stroke-width="2"/><rect x="119.300" y="446.9" width="9.400" height="3" fill="#eef0f3"/></svg><div class="t" style="left:149.8px;top:283.17px;font-size:20px;color:#fff;font-weight:normal;letter-spacing:0.27px;-webkit-text-stroke:0.3px #fff;">AutoLISP-Automation-A.lsp</div><div class="t" style="left:149.8px;top:334.77px;font-size:20px;color:#fff;font-weight:normal;letter-spacing:0.27px;-webkit-text-stroke:0.3px #fff;">AutoLISP-Custom-Settings.lsp</div><div class="t" style="left:149.8px;top:386.27px;font-size:20px;color:#fff;font-weight:normal;letter-spacing:0.27px;-webkit-text-stroke:0.3px #fff;">AutoLISP-Drafting-Standards.lsp</div><div class="t" style="left:149.8px;top:437.77px;font-size:20px;color:#fff;font-weight:normal;letter-spacing:0.27px;-webkit-text-stroke:0.3px #fff;">AutoLISP-Set-Properties.lsp</div><div id="div2"></div><div class="t" style="left:131.4px;top:478.79px;font-size:19.5px;color:#5cc8f5;font-weight:normal;letter-spacing:0px;-webkit-text-stroke:0.3px #5cc8f5;">Manage LISP...</div><div id="tip"></div><div id="tiparrow"></div><div class="t" style="left:493.8px;top:377.72px;font-size:19px;color:#222b3a;font-weight:normal;letter-spacing:0px;-webkit-text-stroke:0.3px #222b3a;-webkit-text-stroke:0.45px #222b3a;">Load</div><div id="rbtn"></div><svg width="1172" height="660" viewBox="0 0 1172 660" fill="none"><g stroke="#b4b9c1" stroke-width="2.600" stroke-linecap="butt"><path d="M527.500 446.500A9.800 9.800 0 0 1 544.500 441.500"/><path d="M546.500 451A9.800 9.800 0 0 1 529.500 456"/></g><path d="M548.500 437.500V446.500H539.500Z" fill="#b4b9c1"/><path d="M525.500 460V451H534.500Z" fill="#b4b9c1"/></svg></body></html>
